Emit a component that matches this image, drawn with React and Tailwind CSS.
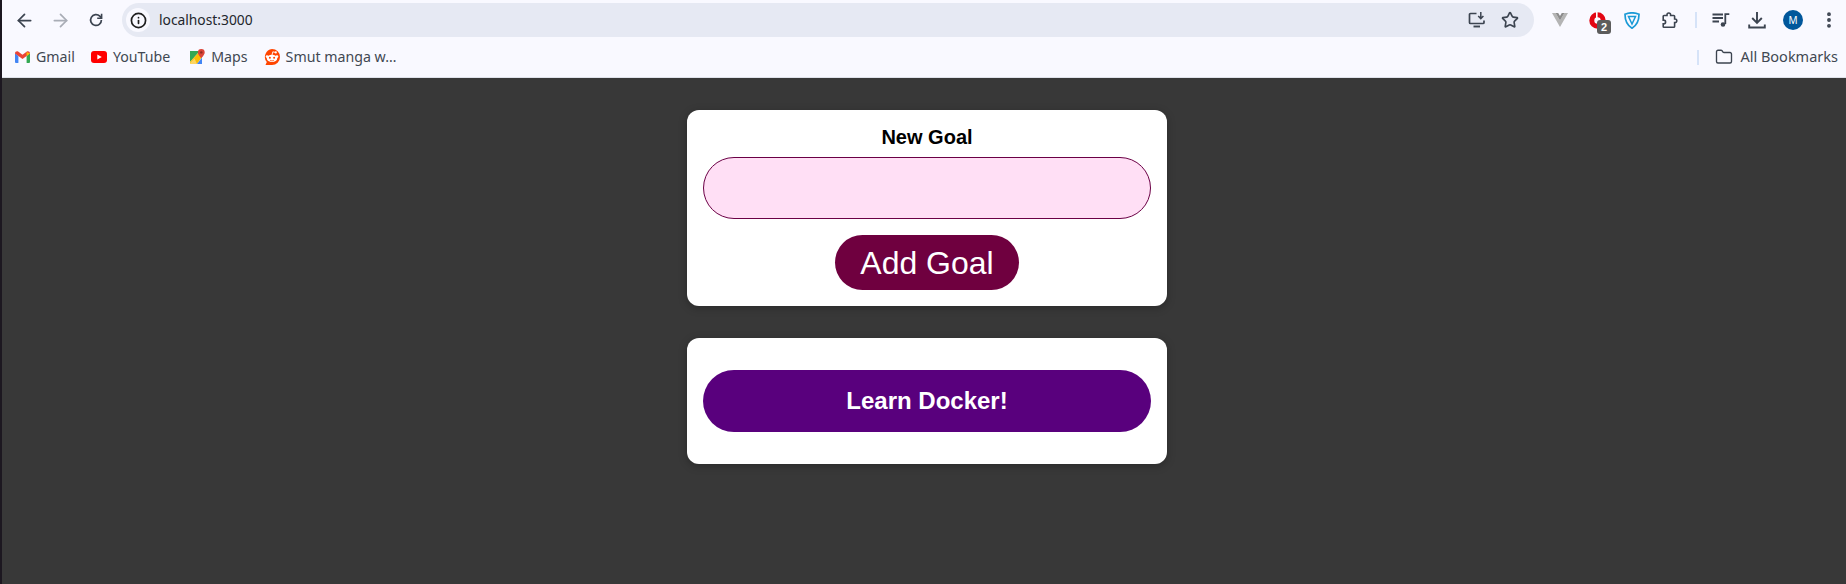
import React from 'react'
import { ArrowLeft, ArrowRight, Info, Star, EllipsisVertical, Folder } from 'lucide-react'

function Reload() {
  return (
    <svg width="16" height="16" viewBox="0 0 16 16" fill="none" stroke="#3c4450" strokeWidth="1.7">
      <path d="M13.4 8a5.4 5.4 0 1 1-1.6-3.8L13.5 6" />
      <path d="M13.6 1.8v4.4H9.2" strokeWidth="1.6" />
    </svg>
  )
}

function InstallIcon() {
  return (
    <svg width="18" height="18" viewBox="0 0 18 18" fill="none" stroke="#3c4450" strokeWidth="1.7">
      <path d="M8.500 2.500H2.500a1 1 0 0 0-1 1v8a1 1 0 0 0 1 1h12.500a1 1 0 0 0 1-1V9.500" />
      <path d="M5.500 15.500h6.500" strokeWidth="1.900" />
      <path d="M12.800 1v6.500M10.200 5l2.600 2.600L15.400 5" strokeWidth="1.500" />
    </svg>
  )
}

function QueueMusicIcon() {
  return (
    <svg width="18" height="18" viewBox="0 0 18 18" fill="none" stroke="#3c4450" strokeWidth="1.800">
      <path d="M.5 3.500h10.500M.5 7h10.500M.5 10.500h6.500" />
      <path d="M13.300 13V3.200h4" />
      <circle cx="11" cy="13.500" r="2.300" fill="#3c4450" stroke="none" />
    </svg>
  )
}

function DownloadIcon() {
  return (
    <svg width="18" height="18" viewBox="0 0 18 18" fill="none" stroke="#3c4450" strokeWidth="1.900">
      <path d="M9 1v10.500M4.200 7 9 11.800 13.800 7" />
      <path d="M1.200 13.500v3h15.600v-3" />
    </svg>
  )
}

function GmailIcon() {
  return (
    <svg width="15" height="12" viewBox="0 0 15 12">
      <path d="M0 2v9a1 1 0 0 0 1 1h2.400V5z" fill="#4285f4" />
      <path d="M15 2v9a1 1 0 0 1-1 1h-2.400V5z" fill="#34a853" />
      <path d="M0 2.400 3.400 5l4.100 3.100L11.600 5 15 2.400C15 .6 13.200-.4 11.900.5L7.500 3.800 3.100.5C1.800-.4 0 .6 0 2.400z" fill="#ea4335" />
      <path d="M11.600 1 15 2.400 11.600 5z" fill="#fbbc04" />
    </svg>
  )
}

function YoutubeIcon() {
  return (
    <svg width="16" height="12" viewBox="0 0 16 12">
      <rect width="16" height="12" rx="3" fill="#f00" />
      <path d="M6.300 3.400 10.800 6l-4.500 2.600z" fill="#fff" />
    </svg>
  )
}

function MapsIcon() {
  return (
    <svg width="16" height="16" viewBox="0 0 16 16">
      <path d="M1 2h9v1L1 13z" fill="#34a853" />
      <path d="M1 13 10 3l3 5-5 7H1z" fill="#fbbc04" />
      <path d="M8 15h5V8.500z" fill="#4285f4" />
      <path d="M5.500 9.500 1 14v1h7z" fill="#fdd663" />
      <path d="M12.300 0a3.400 3.400 0 0 0-3.400 3.400c0 2.300 3.400 5.600 3.400 5.600s3.400-3.300 3.400-5.600A3.400 3.400 0 0 0 12.300 0z" fill="#db4437" />
      <circle cx="12.300" cy="3.400" r="1.200" fill="#8f2a20" />
    </svg>
  )
}

function RedditIcon() {
  return (
    <svg width="16" height="16" viewBox="0 0 16 16">
      <path d="M8 0a8 8 0 1 1 0 16H1.500l1.300-2.900A8 8 0 0 1 8 0z" fill="#ff4500" />
      <ellipse cx="8" cy="9.400" rx="5.200" ry="3.600" fill="#fff" />
      <circle cx="3" cy="7.600" r="1.300" fill="#fff" />
      <circle cx="13" cy="7.600" r="1.300" fill="#fff" />
      <circle cx="5.900" cy="8.800" r="1" fill="#ff4500" />
      <circle cx="10.100" cy="8.800" r="1" fill="#ff4500" />
      <path d="M8 6 8.800 2.800l2.600.6" stroke="#fff" strokeWidth="0.900" fill="none" />
      <circle cx="11.800" cy="3.400" r="1.100" fill="#fff" />
      <path d="M6 11.200c1.200.8 2.800.8 4 0" stroke="#ff4500" strokeWidth="0.700" fill="none" />
    </svg>
  )
}

function VueIcon() {
  return (
    <svg width="16" height="14" viewBox="0 0 16 14">
      <path d="M0 0h3.600L8 7.400 12.400 0H16L8 14z" fill="#b4b4b4" />
      <path d="M3.600 0h2.600L8 3l1.800-3h2.600L8 7.400z" fill="#8c8c8c" />
    </svg>
  )
}

function RedExtension() {
  return (
    <div className="relative w-[22px] h-[26px]">
      <svg width="17" height="17" viewBox="0 0 17 17" className="absolute left-0 top-0">
        <circle cx="8.500" cy="8.500" r="5.700" fill="none" stroke="#e30613" strokeWidth="5" />
        <rect x="7" y="0" width="1.600" height="8" fill="#fff" />
      </svg>
      <span className="absolute left-[8px] top-[8px] w-[14px] h-[14px] rounded-[3px] bg-[#5c5c5c] text-white text-[11px] font-bold leading-[14px] text-center font-['Liberation_Sans',sans-serif]">
        2
      </span>
    </div>
  )
}

function ShieldIcon() {
  return (
    <svg width="16" height="17" viewBox="0 0 16 17" fill="none">
      <path d="M1 2.200C5 .6 11 .6 15 2.200c0 6-2 11-7 14C3 13.200 1 8.200 1 2.200z" stroke="#1a9ad6" strokeWidth="1.700" />
      <path d="M4.500 4.600h7L8 12z" stroke="#1a9ad6" strokeWidth="1.500" />
    </svg>
  )
}

function PuzzleIcon() {
  return (
    <svg width="17" height="17" viewBox="0 0 17 17" fill="none" stroke="#3c4450" strokeWidth="1.600">
      <path d="M6 2.800a1.800 1.800 0 0 1 3.600 0V3.500h3.200a.8.8 0 0 1 .8.8v2.700h.4a1.800 1.800 0 0 1 0 3.600h-.4v3.800a.8.8 0 0 1-.8.8H3a.8.8 0 0 1-.8-.8v-2.500h.5a1.900 1.900 0 0 0 0-3.800h-.5V4.300a.8.8 0 0 1 .8-.8h3z" />
    </svg>
  )
}

function Bookmark({ icon, label, className }) {
  return (
    <div className={`flex items-center gap-[6px] ${className}`}>
      {icon}
      <span className="text-[14.200px] text-[#414852]">{label}</span>
    </div>
  )
}

function BrowserBar() {
  return (
    <div className="flex flex-col bg-[#f9f9ff] border-b border-[#dfe2ea] h-[78px] font-['Noto_Sans',sans-serif]">
      {/* toolbar */}
      <div className="flex items-center h-[40px]">
        <div className="flex items-center justify-center w-[44px]">
          <ArrowLeft size={21} color="#3c4450" strokeWidth={2} />
        </div>
        <div className="flex items-center justify-center w-[28px]">
          <ArrowRight size={21} color="#a9adb6" strokeWidth={2} />
        </div>
        <div className="flex items-center justify-center w-[44px]">
          <Reload />
        </div>
        <div className="flex items-center h-[34px] w-[1412px] ml-[4px] rounded-full bg-[#e6e9f3]">
          <div className="flex items-center justify-center w-[24px] h-[24px] ml-[4px] rounded-full bg-[#f9f9ff]">
            <Info size={17} color="#1f1f1f" strokeWidth={2.400} />
          </div>
          <span className="ml-[9px] text-[13.800px] text-[#22262c]">localhost:3000</span>
          <div className="ml-auto mr-[15px] flex items-center gap-[15px]">
            <InstallIcon />
            <Star size={18} color="#3c4450" strokeWidth={2.200} />
          </div>
        </div>
        <div className="flex items-center ml-[18px]">
          <div className="w-[16px] mr-[21px]"><VueIcon /></div>
          <div className="w-[22px] mt-[10px] mr-[13px]"><RedExtension /></div>
          <div className="w-[16px] mr-[21px]"><ShieldIcon /></div>
          <div className="w-[17px]"><PuzzleIcon /></div>
          <div className="w-[2px] h-[16px] bg-[#d6e3f8] ml-[17px]" />
          <div className="ml-[15px]"><QueueMusicIcon /></div>
          <div className="ml-[18px]"><DownloadIcon /></div>
          <div className="flex items-center justify-center w-[20px] h-[20px] ml-[17px] rounded-full bg-[#01579b] text-white text-[10px]">
            M
          </div>
          <EllipsisVertical size={20} color="#3c4450" strokeWidth={2.600} className="ml-[16px]" />
        </div>
      </div>
      {/* bookmarks */}
      <div className="flex items-center h-[37px] pb-[3px]">
        <Bookmark icon={<GmailIcon />} label="Gmail" className="ml-[13px]" />
        <Bookmark icon={<YoutubeIcon />} label="YouTube" className="ml-[16px]" />
        <Bookmark icon={<MapsIcon />} label="Maps" className="ml-[19px]" />
        <Bookmark icon={<RedditIcon />} label="Smut manga w…" className="ml-[16px]" />
        <div className="ml-auto w-[2px] h-[15px] bg-[#d6e3f8]" />
        <div className="flex items-center gap-[7px] ml-[16px] mr-[8px]">
          <Folder size={18} color="#3c4450" strokeWidth={1.800} />
          <span className="text-[14.500px] text-[#414852]">All Bookmarks</span>
        </div>
      </div>
    </div>
  )
}

function App() {
  return (
    <div className="flex h-[584px] bg-[#383838] font-['Liberation_Sans',sans-serif]">
      <div className="w-[2px] h-full bg-[#1c1720]" />
      <div className="flex-1 flex flex-col min-w-0">
        <BrowserBar />
        <main className="flex-1 flex flex-col items-center gap-[32px] pt-[32px] pl-[6px]">
          {/* goal form */}
          <section className="w-[480px] p-4 bg-white rounded-xl shadow-[0_2px_8px_rgba(0,0,0,0.26)]">
            <label className="block mb-2 text-center text-[20px] leading-[23px] font-bold text-black">New Goal</label>
            <input className="block w-full h-[62px] px-4 rounded-[31px] border border-[#6b0045] bg-[#ffdff5] outline-none" />
            <div className="mt-4 text-center">
              <button className="h-[55px] w-[184px] rounded-[28px] bg-[#6f003f] text-white text-[32px]">Add Goal</button>
            </div>
          </section>
          {/* goals list */}
          <section className="w-[480px] px-4 py-8 bg-white rounded-xl shadow-[0_2px_8px_rgba(0,0,0,0.26)]">
            <div className="flex items-center justify-center h-[62px] rounded-[31px] bg-[#59007d] text-white text-[24px] font-bold">
              Learn Docker!
            </div>
          </section>
        </main>
      </div>
    </div>
  )
}

export default App
